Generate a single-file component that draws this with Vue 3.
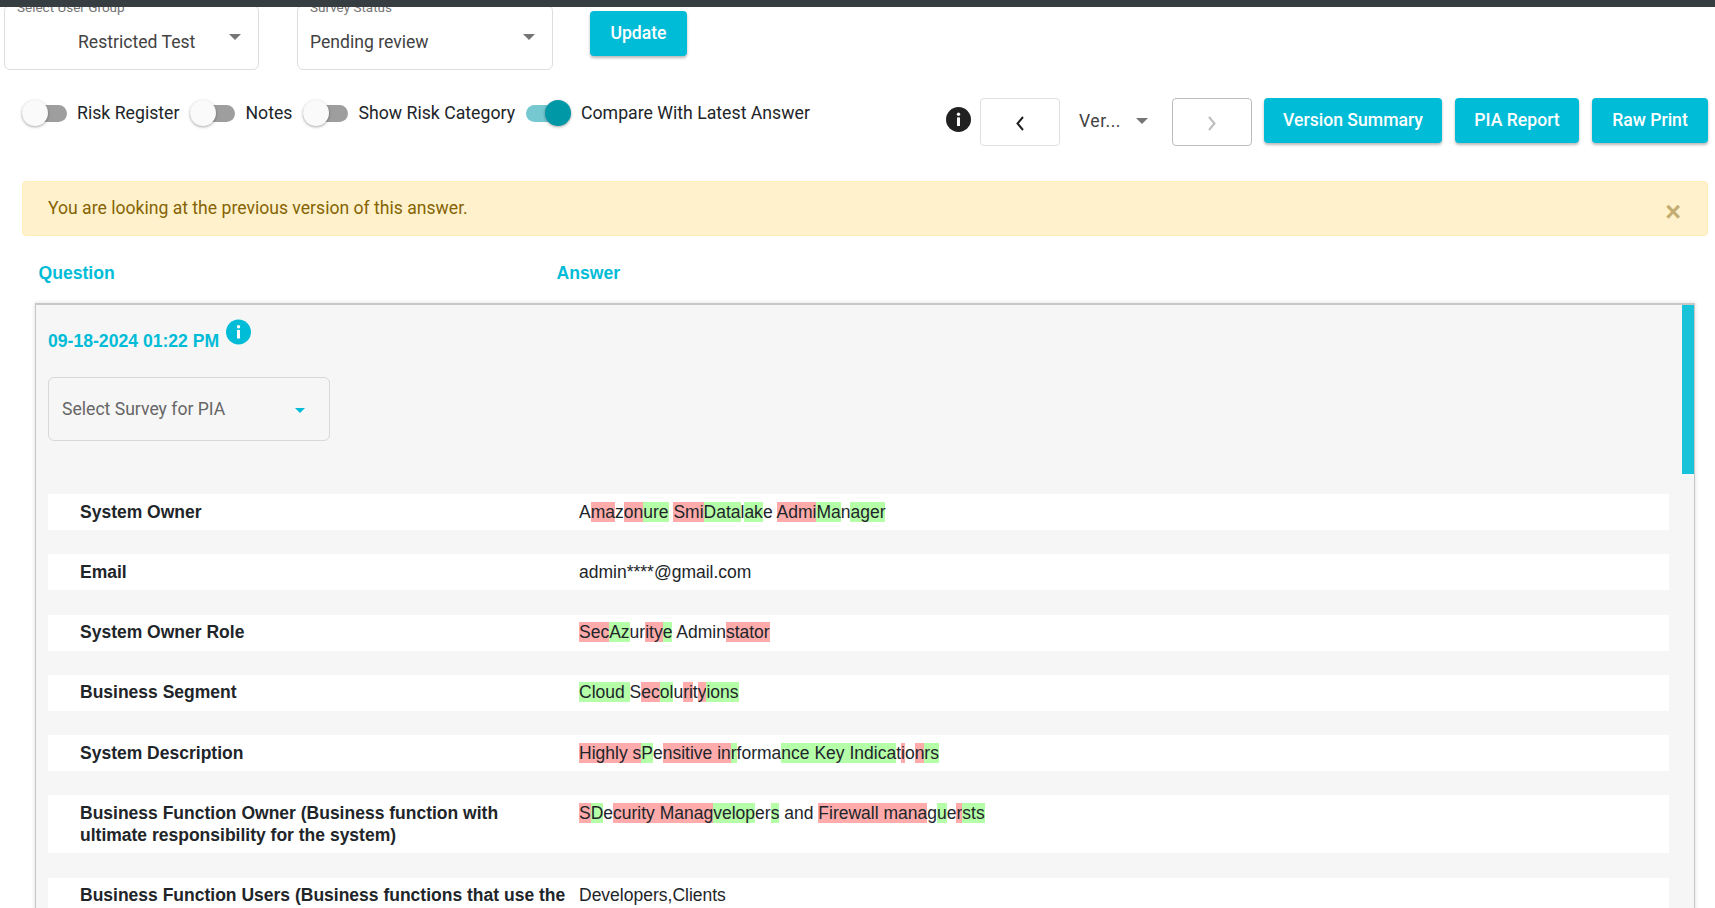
<script setup>
const toggles = [
  { label: 'Risk Register', on: false },
  { label: 'Notes', on: false },
  { label: 'Show Risk Category', on: false },
  { label: 'Compare With Latest Answer', on: true },
]
const rows = [
  { q: 'System Owner', a: [['A'],['ma','r'],['z'],['on','r'],['ure','g'],[' '],['Smi','r'],['Data','g'],['l'],['ak','g'],['e '],['Admi','r'],['Ma','g'],['n'],['ager','g']] },
  { q: 'Email', a: [['admin****@gmail.com']] },
  { q: 'System Owner Role', a: [['Sec','r'],['Az','g'],['ur'],['ity','r'],['e','g'],[' Admin'],['stator','r']] },
  { q: 'Business Segment', a: [['Cloud ','g'],['S'],['ec','r'],['ol','g'],['u'],['ri','r'],['t'],['y','r'],['ions','g']] },
  { q: 'System Description', a: [['Highly s','r'],['P','g'],['e'],['nsitive in','r'],['r','g'],['forma'],['nce Key Indica','g'],['t'],['i','r'],['o'],['n','r'],['rs','g']] },
  { q: 'Business Function Owner (Business function with ultimate responsibility for the system)', a: [['S','r'],['D','g'],['e'],['curity Manag','r'],['velop','g'],['er'],['s','g'],[' and '],['Firewall mana','r'],['g'],['u','g'],['e'],['r','r'],['sts','g']] },
  { q: 'Business Function Users (Business functions that use the system)', a: [['Developers,Clients']] },
]
</script>

<template>
  <div class="page">
    <div class="topbar"></div>

    <section class="filters">
      <div class="select first">
        <span class="float">Select User Group</span>
        <span class="value indent">Restricted Test</span>
        <i class="caret"></i>
      </div>
      <div class="select second">
        <span class="float">Survey Status</span>
        <span class="value">Pending review</span>
        <i class="caret"></i>
      </div>
      <button class="btn update">Update</button>
    </section>

    <section class="tools">
      <div class="toggles">
        <label v-for="t in toggles" :key="t.label" class="toggle" :class="{ on: t.on }">
          <span class="switch"><span class="thumb"></span></span>
          <span class="t-label">{{ t.label }}</span>
        </label>
      </div>
      <div class="actions">
        <svg class="info-dark" viewBox="0 0 25 25" width="25" height="25">
          <circle cx="12.5" cy="12.5" r="12.5" fill="#212121" />
          <circle cx="12.5" cy="7.2" r="1.7" fill="#fff" />
          <rect x="11" y="10.4" width="3" height="8.6" fill="#fff" />
        </svg>
        <button class="nav">
          <svg viewBox="0 0 12 18" width="12" height="18"><path d="M9 3 L3.5 9.5 L9 16" fill="none" stroke="#212121" stroke-width="2" /></svg>
        </button>
        <div class="version"><span class="ver">Ver...</span><i class="caret"></i></div>
        <button class="nav next">
          <svg viewBox="0 0 12 18" width="12" height="18"><path d="M3 3 L8.5 9.5 L3 16" fill="none" stroke="#bdbdbd" stroke-width="2" /></svg>
        </button>
        <button class="btn vs">Version Summary</button>
        <button class="btn pia">PIA Report</button>
        <button class="btn raw">Raw Print</button>
      </div>
    </section>

    <div class="alert">
      <span>You are looking at the previous version of this answer.</span>
      <span class="close">×</span>
    </div>

    <div class="heads">
      <span class="h-q">Question</span>
      <span>Answer</span>
    </div>

    <section class="card">
      <div class="scroll-thumb"></div>
      <div class="date-line">
        <span class="date">09-18-2024 01:22 PM</span>
        <svg class="info-teal" viewBox="0 0 25 25" width="25" height="26">
          <circle cx="12.5" cy="12.5" r="12.5" fill="#00bcd7" />
          <circle cx="12.5" cy="7.2" r="1.7" fill="#fff" />
          <rect x="11" y="10.4" width="3" height="8.6" fill="#fff" />
        </svg>
      </div>
      <div class="survey">
        <span>Select Survey for PIA</span>
        <i class="caret teal"></i>
      </div>
      <div class="rows">
        <div v-for="r in rows" :key="r.q" class="row">
          <div class="q">{{ r.q }}</div>
          <div class="a"><span v-for="(s, i) in r.a" :key="i" :class="s[1]">{{ s[0] }}</span></div>
        </div>
      </div>
    </section>
  </div>
</template>

<style>
html, body { margin: 0; height: 908px; overflow: hidden; background: #fff; }
</style>

<style scoped>
.page {
  position: relative;
  width: 1715px;
  height: 908px;
  overflow: hidden;
  background: #fff;
  font-family: Roboto, "Liberation Sans", sans-serif;
  font-size: 17.6px;
  color: #212529;
}
.topbar {
  position: absolute;
  top: 0;
  left: 0;
  right: 0;
  height: 7px;
  background: #373e41;
  z-index: 3;
}
.filters {
  display: flex;
  align-items: flex-start;
  padding: 5px 0 0 4px;
  height: 65px;
  box-sizing: content-box;
}
.select {
  position: relative;
  box-sizing: border-box;
  width: 255px;
  height: 65px;
  border: 1px solid #ddd;
  border-radius: 6px;
  color: #424242;
  flex: none;
}
.select.second { width: 256px; margin-left: 38px; }
.float {
  position: absolute;
  left: 12px;
  top: -7px;
  font-size: 13.5px;
  line-height: 16px;
  color: #757575;
  background: #fff;
}
.value {
  position: absolute;
  left: 12px;
  top: 24px;
  line-height: 24px;
}
.value.indent { left: 73px; }
.caret {
  display: block;
  width: 0;
  height: 0;
  border-left: 6px solid transparent;
  border-right: 6px solid transparent;
  border-top: 6px solid #757575;
}
.select .caret { position: absolute; right: 17px; top: 28px; }
.btn {
  border: none;
  border-radius: 4px;
  background: #00bcd7;
  color: #fff;
  font-family: Roboto, sans-serif;
  font-weight: 500;
  font-size: 17.6px;
  height: 45px;
  padding: 0 0 2px;
  box-shadow: 0 2px 3px rgba(0, 0, 0, 0.28);
}
.update { width: 97px; margin: 6px 0 0 37px; }
.tools {
  display: flex;
  justify-content: space-between;
  align-items: flex-start;
  height: 48px;
  margin-top: 28px;
  padding: 0 7px 0 22px;
}
.toggles { display: flex; padding-top: 2px; }
.toggle {
  display: flex;
  align-items: center;
  gap: 10px;
  height: 26px;
  margin-right: 11px;
  font-size: 17.7px;
  color: #212529;
}
.switch {
  position: relative;
  display: block;
  width: 45px;
  height: 17px;
  border-radius: 9px;
  background: #9e9e9e;
}
.thumb {
  position: absolute;
  left: 0;
  top: -4.5px;
  width: 26px;
  height: 26px;
  border-radius: 50%;
  background: #fafafa;
  box-shadow: 0 1px 3px rgba(0, 0, 0, 0.35);
}
.toggle.on .switch { background: #75c7d0; }
.toggle.on .thumb { left: 19px; background: #0097a7; }
.actions { display: flex; align-items: flex-start; }
.info-dark { margin: 9px 9px 0 0; }
.nav {
  width: 80px;
  height: 48px;
  padding: 0;
  background: #fff;
  border: 1px solid #e0e0e0;
  border-radius: 4px;
  display: flex;
  align-items: center;
  justify-content: center;
}
.nav svg { margin-top: 2px; }
.nav.next { border-color: #bdbdbd; }
.version {
  width: 112px;
  box-sizing: border-box;
  padding: 0 24px 0 19px;
  height: 45px;
  display: flex;
  align-items: center;
  justify-content: space-between;
  color: #424242;
}
.ver { letter-spacing: 0.5px; }
.vs { width: 178px; margin-left: 12px; }
.pia { width: 124px; margin-left: 13px; }
.raw { width: 116px; margin-left: 13px; }
.alert {
  position: relative;
  box-sizing: border-box;
  margin: 35px 7px 0 22px;
  height: 55px;
  padding: 0 25px;
  display: flex;
  align-items: center;
  background: #fff1cc;
  border: 1px solid #ffeeba;
  border-radius: 4px;
  color: #856404;
}
.alert > span:first-child { position: relative; top: -1px; }
.close {
  position: absolute;
  right: 26px;
  top: 11px;
  font-family: "Liberation Sans", sans-serif;
  font-weight: 700;
  font-size: 27px;
  line-height: 38px;
  color: #c4ad72;
}
.heads {
  display: flex;
  margin-top: 26px;
  padding-left: 38.5px;
  height: 22px;
  line-height: 22px;
  font-family: "Liberation Sans", Arial, sans-serif;
  font-weight: 700;
  color: #00bcd7;
}
.h-q { width: 518px; }
.card {
  position: relative;
  box-sizing: border-box;
  margin: 19px 20px 0 35px;
  height: 640px;
  padding: 14px 25px 0 12px;
  background: #f6f6f6;
  border: 1px solid #c8c8c8;
  border-top-width: 2px;
  box-shadow: 0 0 4px rgba(0, 0, 0, 0.15);
  font-family: "Liberation Sans", Arial, sans-serif;
  font-size: 17.5px;
}
.scroll-thumb {
  position: absolute;
  top: 0;
  right: 0;
  width: 12px;
  height: 169px;
  background: #17c3d9;
}
.date-line { display: flex; align-items: flex-start; height: 58px; }
.date {
  margin-top: 11px;
  font-size: 17.6px;
  font-weight: 700;
  line-height: 22px;
  color: #00bcd7;
}
.info-teal { margin-left: 7px; }
.survey {
  box-sizing: border-box;
  width: 282px;
  height: 64px;
  padding: 0 24px 0 13px;
  display: flex;
  align-items: center;
  justify-content: space-between;
  border: 1px solid #d8d8d8;
  border-radius: 6px;
  font-family: Roboto, sans-serif;
  font-size: 17.6px;
  color: #666;
}
.caret.teal {
  border-left-width: 5px;
  border-right-width: 5px;
  border-top-width: 5px;
  border-top-color: #00bcd7;
  margin-top: 2px;
}
.rows {
  display: flex;
  flex-direction: column;
  gap: 24.3px;
  margin-top: 53px;
}
.row {
  display: grid;
  grid-template-columns: 531px 1fr;
  padding: 6.5px 0 7.5px;
  line-height: 22px;
  background: #fff;
}
.q {
  padding: 0 10px 0 32px;
  font-weight: 700;
}
.r { background: #ffabab; }
.g { background: #b4ffa8; }
</style>
